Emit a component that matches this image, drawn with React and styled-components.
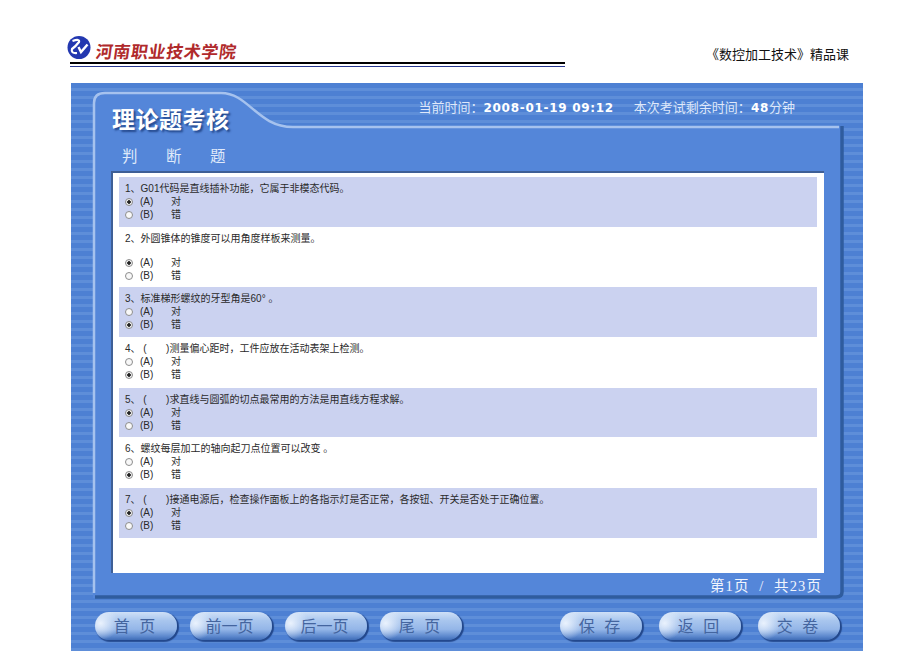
import React from "react";
import styled, { createGlobalStyle } from "styled-components";

const Global = createGlobalStyle`
  html, body { margin: 0; padding: 0; background: #fff; }
  body { font-family: "Liberation Sans", "Noto Sans CJK SC", sans-serif; }
`;
const Page = styled.div`width: 920px; height: 651px; overflow: hidden;`;
const Header = styled.header`
  height: 83px; display: flex; justify-content: space-between;
  padding: 0 71px 0 70px; box-sizing: border-box;
`;
const Brand = styled.div`
  width: 495px; height: 67px; box-sizing: border-box; display: flex; align-items: flex-start; gap: 5px;
  border-bottom: 1px solid #27378f; position: relative;
  &::after { content: ""; position: absolute; left: 0; right: 0; bottom: 2px; height: 2px; background: #000; }
`;
const Logo = styled.svg`flex: none; margin: 36px 0 0 -3px;`;
const School = styled.div`
  margin-top: 42px; font: 700 17px/18px "Noto Sans CJK SC", sans-serif; color: #b02a2c; letter-spacing: 0.6px;
  transform: skewX(-8deg);
`;
const Course = styled.div`
  padding-top: 45px; font: 400 13px/18px "Noto Sans CJK SC", sans-serif; color: #111;
`;
const Stage = styled.main`
  position: relative; margin-left: 71px; width: 792px; height: 568px; overflow: hidden;
  background: repeating-linear-gradient(180deg, #4d80d3 0 5px, #5e8ed9 5px 8px);
`;
const PanelShape = styled.svg`position: absolute; left: 0; top: 0;`;
const Content = styled.div`position: relative; display: flex; flex-direction: column; height: 100%;`;
const Masthead = styled.div`height: 61px; display: flex; justify-content: space-between; padding: 0 68px 0 41px;`;
const Title = styled.h1`
  margin: 20px 0 0; font: 700 23px/30px "Noto Sans CJK SC", sans-serif; color: #fff; letter-spacing: 0.5px;
  text-shadow: 2px 2px 2px #24488c;
`;
const Clock = styled.div`
  margin-top: 15px; display: flex; gap: 20px; font: 400 13px/18px "Noto Sans CJK SC", sans-serif; color: #dfe8fa; white-space: pre;
  b { font: 700 12px/18px "DejaVu Sans", sans-serif; color: #fff; letter-spacing: 0.7px; }
`;
const Section = styled.h2`
  margin: 0 0 0 51px; height: 27px; font: 400 15.5px/22px "Noto Sans CJK SC", sans-serif; color: #dfe9fa;
  word-spacing: 25px;
`;
const Paper = styled.section`
  margin-left: 40px; width: 713px; height: 402px; box-sizing: border-box; background: #fff;
  border-top: 2px solid #3e5f96; border-left: 2px solid #3e5f96; padding: 4px 7px 0 6px;
`;
const Row = styled.article`
  height: ${p => p.$h}px; box-sizing: border-box; padding: 5px 6px 0;
  background: ${p => (p.$shade ? "#cbd2f0" : "#fff")};
  color: #2a2a2a; font: 400 10px/13px "Liberation Sans", "Noto Sans CJK SC", sans-serif;
`;
const Question = styled.div`height: ${p => p.$h}px; white-space: pre;`;
const Option = styled.label`display: flex; align-items: center; height: 13px;`;
const Radio = styled.input`
  appearance: none; margin: 0 7px 0 0; width: 8px; height: 8px; border-radius: 50%; box-sizing: border-box;
  border: 1px solid #8d8d8d; background: ${p => (p.checked
    ? "radial-gradient(circle, #222 0 1.5px, #eee 2px)"
    : "#f8f8f8")};
`;
const Letter = styled.span`width: 31px;`;
const Footer = styled.div`
  height: 27px; width: 751px; box-sizing: border-box; text-align: right; letter-spacing: 1.1px; word-spacing: 5px;
  font: 400 14.5px/26px "Liberation Serif", "Noto Sans CJK SC", serif; color: #f1f5fd; white-space: pre;
`;
const Bar = styled.nav`margin: 12px 0 0 24px; display: flex; gap: 98px;`;
const Group = styled.div`display: flex; gap: ${p => p.$gap}px;`;
const Pill = styled.button`
  width: 82px; height: 28px; padding: 0 3px 2px 0; border: 0; border-radius: 14px;
  background:
    radial-gradient(ellipse 22% 60% at 7% 40%, #eaf2fd 0%, rgba(234,242,253,0) 100%),
    linear-gradient(180deg, #cfe0f7 0%, #a9c6ee 30%, #94b6e8 62%, #5a86cc 88%, #3f6cb6 100%);
  box-shadow: 2px 1px 1px #23488c, 1px 2px 1px #2a5096;
  color: #44659f; font: 400 16px/26px "Noto Sans CJK SC", sans-serif; white-space: pre; word-spacing: 6px;
`;

const rows = [
  { q: "1、G01代码是直线插补功能，它属于非模态代码。", a: 0, h: 50, qh: 13 },
  { q: "2、外圆锥体的锥度可以用角度样板来测量。", a: 0, h: 60, qh: 24 },
  { q: "3、标准梯形螺纹的牙型角是60° 。", a: 1, h: 50, qh: 13 },
  { q: "4、 (       )测量偏心距时，工件应放在活动表架上检测。", a: 1, h: 51, qh: 13 },
  { q: "5、 (       )求直线与圆弧的切点最常用的方法是用直线方程求解。", a: 0, h: 49, qh: 13 },
  { q: "6、螺纹每层加工的轴向起刀点位置可以改变 。", a: 1, h: 51, qh: 13 },
  { q: "7、 (       )接通电源后，检查操作面板上的各指示灯是否正常，各按钮、开关是否处于正确位置。", a: 0, h: 50, qh: 13 },
];

export default function App() {
  return (
    <Page>
      <Global />
      <Header>
        <Brand>
          <Logo width="24" height="23" viewBox="0 0 24 23">
            <circle cx="12" cy="11.5" r="11.5" fill="#2338b0" />
            <path d="M5.5 5 Q13 2.5 12 6 Q9 10 5 13 Q3.5 17.5 10 17" fill="none" stroke="#fff" strokeWidth="2.2" />
            <path d="M11.5 11 L14 16 L20.5 8.5" fill="none" stroke="#fff" strokeWidth="2.4" />
          </Logo>
          <School>河南职业技术学院</School>
        </Brand>
        <Course>《数控加工技术》精品课</Course>
      </Header>
      <Stage>
        <PanelShape width="792" height="568" viewBox="0 0 792 568">
          <path d="M22 515 L22 20 Q22 9 34 9 L150 9 C178 9 186 43 222 43 L772 43 L772 510 Q772 515 766 515 Z" fill="#5486d9" />
          <path d="M23 510 L23 20 Q23 10 34 10 L150 10 C178 10 186 44 222 44 L768 44" fill="none" stroke="#a6c2ee" strokeWidth="2.5" />
          <path d="M771 43 L771 509 Q771 514 765 514 L24 514" fill="none" stroke="#2f5c9e" strokeWidth="3.5" />
        </PanelShape>
        <Content>
          <Masthead>
            <Title>理论题考核</Title>
            <Clock>
              <span>当前时间：<b>2008-01-19 09:12</b></span>
              <span>本次考试剩余时间：<b>48</b>分钟</span>
            </Clock>
          </Masthead>
          <Section>判 断 题</Section>
          <Paper>
            {rows.map((r, i) => (
              <Row key={i} $h={r.h} $shade={i % 2 === 0}>
                <Question $h={r.qh}>{r.q}</Question>
                <Option><Radio type="radio" readOnly checked={r.a === 0} /><Letter>(A)</Letter>对</Option>
                <Option><Radio type="radio" readOnly checked={r.a === 1} /><Letter>(B)</Letter>错</Option>
              </Row>
            ))}
          </Paper>
          <Footer>第1页 / 共23页</Footer>
          <Bar>
            <Group $gap={13}>
              <Pill>首 页</Pill><Pill>前一页</Pill><Pill>后一页</Pill><Pill>尾 页</Pill>
            </Group>
            <Group $gap={17}>
              <Pill>保 存</Pill><Pill>返 回</Pill><Pill>交 卷</Pill>
            </Group>
          </Bar>
        </Content>
      </Stage>
    </Page>
  );
}
